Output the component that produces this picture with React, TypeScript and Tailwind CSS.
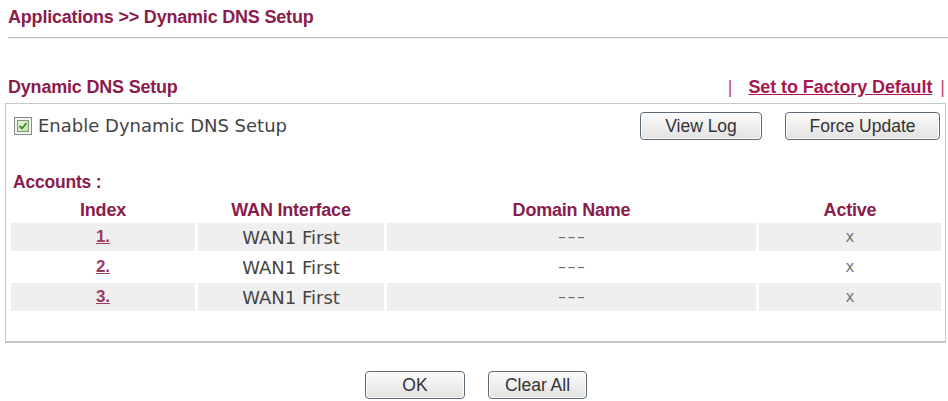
import React from "react";

const maroon = "text-[#8a1c4c]";

function Btn({ label, w }: { label: string; w: string }) {
  return (
    <div
      className={`${w} h-[28px] flex items-center justify-center rounded-[4px] border-[1.5px] border-[#5d6b78] bg-gradient-to-b from-[#fbfbfb] to-[#e2e2e2] text-[17.5px] text-[#333] shadow-[inset_0_0_0_1px_#fff]`}
      style={{ fontFamily: "'Liberation Sans', Arial, sans-serif" }}
    >
      {label}
    </div>
  );
}

const rows = [
  { idx: "1.", wan: "WAN1 First", shade: true },
  { idx: "2.", wan: "WAN1 First", shade: false },
  { idx: "3.", wan: "WAN1 First", shade: true },
];

export default function App() {
  const bold = { fontFamily: "'Liberation Sans', Arial, sans-serif" };
  const body = { fontFamily: "'DejaVu Sans', Verdana, sans-serif" };
  return (
    <div className="w-[948px] h-[401px] bg-white overflow-hidden relative">
      <div className="pl-[8px] pt-[6px]">
        <div className={`text-[18px] font-bold ${maroon} leading-[22px] tracking-[-0.2px]`} style={bold}>
          Applications &gt;&gt; Dynamic DNS Setup
        </div>
      </div>
      <div className="ml-[8px] mt-[9px] h-[2px] border-t border-[#bdbdbd] border-b border-b-[#ececec]" />

      <div className="flex items-end justify-between pl-[8px] pr-[3px] mt-[38px] h-[24px]">
        <div className={`text-[18px] font-bold ${maroon} tracking-[-0.2px]`} style={bold}>
          Dynamic DNS Setup
        </div>
        <div className="text-[18px] font-bold flex items-center gap-[16px]" style={bold}>
          <span className="text-[#c2486e] font-normal">|</span>
          <span className="text-[#a8174d] underline tracking-[-0.1px]">Set to Factory Default</span>
          <span className="text-[#c2486e] font-normal -ml-[8px]">|</span>
        </div>
      </div>

      <div className="ml-[5px] mt-[2px] w-[941px] h-[240px] border-[1.5px] border-[#c8c8c8] border-b-[2px] px-[5px]">
        <div className="flex items-center justify-between pt-[8px]">
          <div className="flex items-center gap-[6px] pl-[3px]">
            <div className="w-[18px] h-[18px] border border-[#8a8a8a] bg-[#f4f4f4] flex items-center justify-center">
              <div className="w-[12px] h-[12px] border border-[#7a9a6a] bg-gradient-to-br from-[#e8f4d8] to-[#c8e0b0] flex items-center justify-center">
                <svg width="10" height="10" viewBox="0 0 10 10">
                  <path d="M1.5 5 L4 7.5 L8.5 2" fill="none" stroke="#3a8a2a" strokeWidth="1.8" />
                </svg>
              </div>
            </div>
            <span className="text-[18px] text-[#444] leading-[22px]" style={body}>
              Enable Dynamic DNS Setup
            </span>
          </div>
          <div className="flex items-center gap-[23px]">
            <Btn label="View Log" w="w-[122px]" />
            <Btn label="Force Update" w="w-[155px]" />
          </div>
        </div>

        <div className={`mt-[33px] pl-[2px] text-[17.5px] font-bold ${maroon} tracking-[-0.2px] leading-[18px]`} style={bold}>
          Accounts :
        </div>

        <div className="mt-[8px] grid grid-cols-[184px_186px_369px_182px] gap-x-[3px] gap-y-[2px]">
          {["Index", "WAN Interface", "Domain Name", "Active"].map((h) => (
            <div key={h} className={`h-[22px] flex items-center justify-center text-[18px] font-bold ${maroon} tracking-[-0.2px]`} style={bold}>
              {h}
            </div>
          ))}
          {rows.map((r, i) => (
            <React.Fragment key={i}>
              <div className={`h-[28px] flex items-center justify-center ${r.shade ? "bg-[#efefef]" : ""}`}>
                <span className="text-[17px] font-bold text-[#9a3a62] underline" style={bold}>{r.idx}</span>
              </div>
              <div className={`h-[28px] flex items-center justify-center ${r.shade ? "bg-[#efefef]" : ""}`}>
                <span className="text-[18px] text-[#444]" style={body}>{r.wan}</span>
              </div>
              <div className={`h-[28px] flex items-center justify-center ${r.shade ? "bg-[#efefef]" : ""}`}>
                <span className="text-[15px] text-[#6a6a6a] tracking-[2px] pl-[2px]" style={body}>–––</span>
              </div>
              <div className={`h-[28px] flex items-center justify-center ${r.shade ? "bg-[#efefef]" : ""}`}>
                <span className="text-[15px] text-[#777]" style={body}>x</span>
              </div>
            </React.Fragment>
          ))}
        </div>
      </div>

      <div className="flex justify-center gap-[23px] mt-[28px] pl-[4px]">
        <Btn label="OK" w="w-[100px]" />
        <Btn label="Clear All" w="w-[99px]" />
      </div>
    </div>
  );
}
